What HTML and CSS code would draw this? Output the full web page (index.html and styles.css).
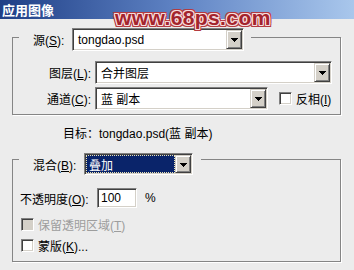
FILE: index.html
```html
<!DOCTYPE html>
<html lang="zh-CN">
<head>
    <meta charset="UTF-8">
    <title>应用图像</title>
    <link rel="stylesheet" href="styles.css">
</head>
<body>
    <div class="window">
        <div class="titlebar">应用图像</div>
        <div class="watermark">www.68ps.com</div>

        <fieldset class="group source">
            <legend>
                <div class="group-head">
                    <span class="head-label">源(<u>S</u>):</span>
                    <div class="combo combo-source">
                        <span class="combo-text">tongdao.psd</span>
                        <span class="combo-btn"><svg width="7" height="4" viewBox="0 0 7 4" shape-rendering="crispEdges"><path d="M0 0h7v1h-1v1h-1v1h-1v1h-1v-1h-1v-1h-1v-1h-1z"/></svg></span>
                    </div>
                </div>
            </legend>
            <div class="row">
                <span class="row-label">图层(<u>L</u>):</span>
                <div class="combo combo-layer">
                    <span class="combo-text">合并图层</span>
                    <span class="combo-btn"><svg width="7" height="4" viewBox="0 0 7 4" shape-rendering="crispEdges"><path d="M0 0h7v1h-1v1h-1v1h-1v1h-1v-1h-1v-1h-1v-1h-1z"/></svg></span>
                </div>
            </div>
            <div class="row">
                <span class="row-label">通道(<u>C</u>):</span>
                <div class="combo combo-channel">
                    <span class="combo-text">蓝 副本</span>
                    <span class="combo-btn"><svg width="7" height="4" viewBox="0 0 7 4" shape-rendering="crispEdges"><path d="M0 0h7v1h-1v1h-1v1h-1v1h-1v-1h-1v-1h-1v-1h-1z"/></svg></span>
                </div>
                <label class="check invert"><span class="box"></span><span>反相(<u>I</u>)</span></label>
            </div>
        </fieldset>

        <div class="target">目标：tongdao.psd(蓝 副本)</div>

        <fieldset class="group blend">
            <legend>
                <div class="group-head">
                    <span class="head-label">混合(<u>B</u>):</span>
                    <div class="combo combo-blend focused">
                        <span class="combo-text">叠加</span>
                        <span class="combo-btn"><svg width="7" height="4" viewBox="0 0 7 4" shape-rendering="crispEdges"><path d="M0 0h7v1h-1v1h-1v1h-1v1h-1v-1h-1v-1h-1v-1h-1z"/></svg></span>
                    </div>
                </div>
            </legend>
            <div class="opacity-row">
                <span class="opacity-label">不透明度(<u>O</u>):</span>
                <span class="field">100</span>
                <span class="unit">%</span>
            </div>
            <label class="check check-row disabled"><span class="box"></span><span>保留透明区域(<u>T</u>)</span></label>
            <label class="check check-row"><span class="box"></span><span>蒙版(<u>K</u>)...</span></label>
        </fieldset>
    </div>
</body>
</html>
```

FILE: styles.css
```css
* {
    margin: 0;
    padding: 0;
    box-sizing: border-box;
}

body {
    background: #ececec;
    color: #000;
    font-family: 'Liberation Sans', 'Noto Sans CJK SC', sans-serif;
    font-size: 12px;
    width: 354px;
    height: 270px;
    overflow: hidden;
}

.window {
    position: relative;
    height: 270px;
}

.titlebar {
    height: 19px;
    line-height: 19px;
    padding-left: 2px;
    color: #fff;
    font: bold 13px 'Noto Sans CJK SC', sans-serif;
    background: linear-gradient(to right, #1f3f86, #5f83c4 50%, #a9c7ec);
}

/* site watermark sits over the title bar */
.watermark {
    position: absolute;
    left: 115px;
    top: 8px;
    font: bold 21px/20px 'Liberation Sans', sans-serif;
    letter-spacing: 0.4px;
    color: #a3242d;
    text-shadow:
        1px 0 #f6dcdc, -1px 0 #f6dcdc, 0 1px #f6dcdc, 0 -1px #f6dcdc,
        1px 1px #f6dcdc, -1px -1px #f6dcdc, 1px -1px #f6dcdc, -1px 1px #f6dcdc,
        2px 0 #b33a40, -2px 0 #b33a40, 0 2px #b33a40, 0 -2px #b33a40,
        2px 2px #b33a40, -2px -2px #b33a40, 2px -2px #b33a40, -2px 2px #b33a40;
}

u {
    text-decoration: underline;
    text-underline-offset: 1px;
}

.group {
    margin: 0 13px 0 12px;
    border: 1px solid #858585;
    box-shadow: 1px 1px 0 #fff;
    padding: 0 6px;
    min-width: 0;
}

.group legend {
    display: block;
}

.group-head {
    display: flex;
    align-items: center;
}

.source {
    margin-top: 5px;
    padding-top: 10px;
    padding-bottom: 4px;
}

.source .group-head {
    padding: 4px 7px 0 14px;
}

.blend {
    margin-top: 2px;
    padding-top: 13px;
    padding-bottom: 5px;
}

.blend .group-head {
    padding: 9px 8px 0 14px;
}

.head-label {
    width: 39px;
}

.blend .head-label {
    width: 51px;
}

.row {
    display: flex;
    align-items: center;
    height: 23px;
}

.row + .row {
    margin-top: 3px;
}

.row-label {
    width: 76px;
    padding-right: 4px;
    text-align: right;
}

/* sunken windows classic combo box */
.combo {
    display: flex;
    height: 23px;
    background: #fff;
    border: 1px solid;
    border-color: #808080 #fff #fff #808080;
    box-shadow: inset 1px 1px 0 #404040, inset -1px -1px 0 #d4d0c8;
    padding: 1px;
}

.combo-source { width: 172px; }
.combo-layer { width: 237px; }
.combo-channel { width: 173px; }
.combo-blend { width: 109px; height: 22px; }

.combo-text {
    flex: 1;
    padding-left: 4px;
    display: flex;
    align-items: center;
    white-space: nowrap;
}

.combo.focused .combo-text {
    background: #0a246a;
    color: #fff;
    padding-left: 3px;
    outline: 1px dotted #e9e3b5;
    outline-offset: -1px;
}

.combo-btn {
    width: 16px;
    display: flex;
    align-items: center;
    justify-content: center;
    background: #d4d0c8;
    border: 1px solid;
    border-color: #d4d0c8 #404040 #404040 #d4d0c8;
    box-shadow: inset 1px 1px 0 #fff, inset -1px -1px 0 #808080;
}

.combo-btn svg {
    display: block;
    margin-top: 1px;
}

.check {
    display: flex;
    align-items: center;
    gap: 4px;
    white-space: nowrap;
}

.box {
    flex: none;
    width: 13px;
    height: 13px;
    background: #fff;
    border: 1px solid;
    border-color: #808080 #fff #fff #808080;
    box-shadow: inset 1px 1px 0 #404040, inset -1px -1px 0 #d4d0c8;
}

.invert {
    margin-left: 11px;
}

.target {
    margin: 11px 0 0 63px;
    line-height: 16px;
    height: 16px;
}

.opacity-row {
    display: flex;
    align-items: center;
    height: 20px;
    padding-left: 1px;
}

.opacity-label {
    width: 77px;
}

.field {
    width: 40px;
    height: 20px;
    line-height: 18px;
    padding-left: 3px;
    background: #fff;
    border: 1px solid;
    border-color: #808080 #fff #fff #808080;
    box-shadow: inset 1px 1px 0 #404040, inset -1px -1px 0 #d4d0c8;
}

.unit {
    margin-left: 8px;
}

.check-row {
    height: 21px;
    padding-left: 2px;
}

.opacity-row + .check-row {
    margin-top: 6px;
}

.check-row.disabled {
    color: #9d9d9d;
}

.check-row.disabled .box {
    background: #d4d0c8;
}
```
